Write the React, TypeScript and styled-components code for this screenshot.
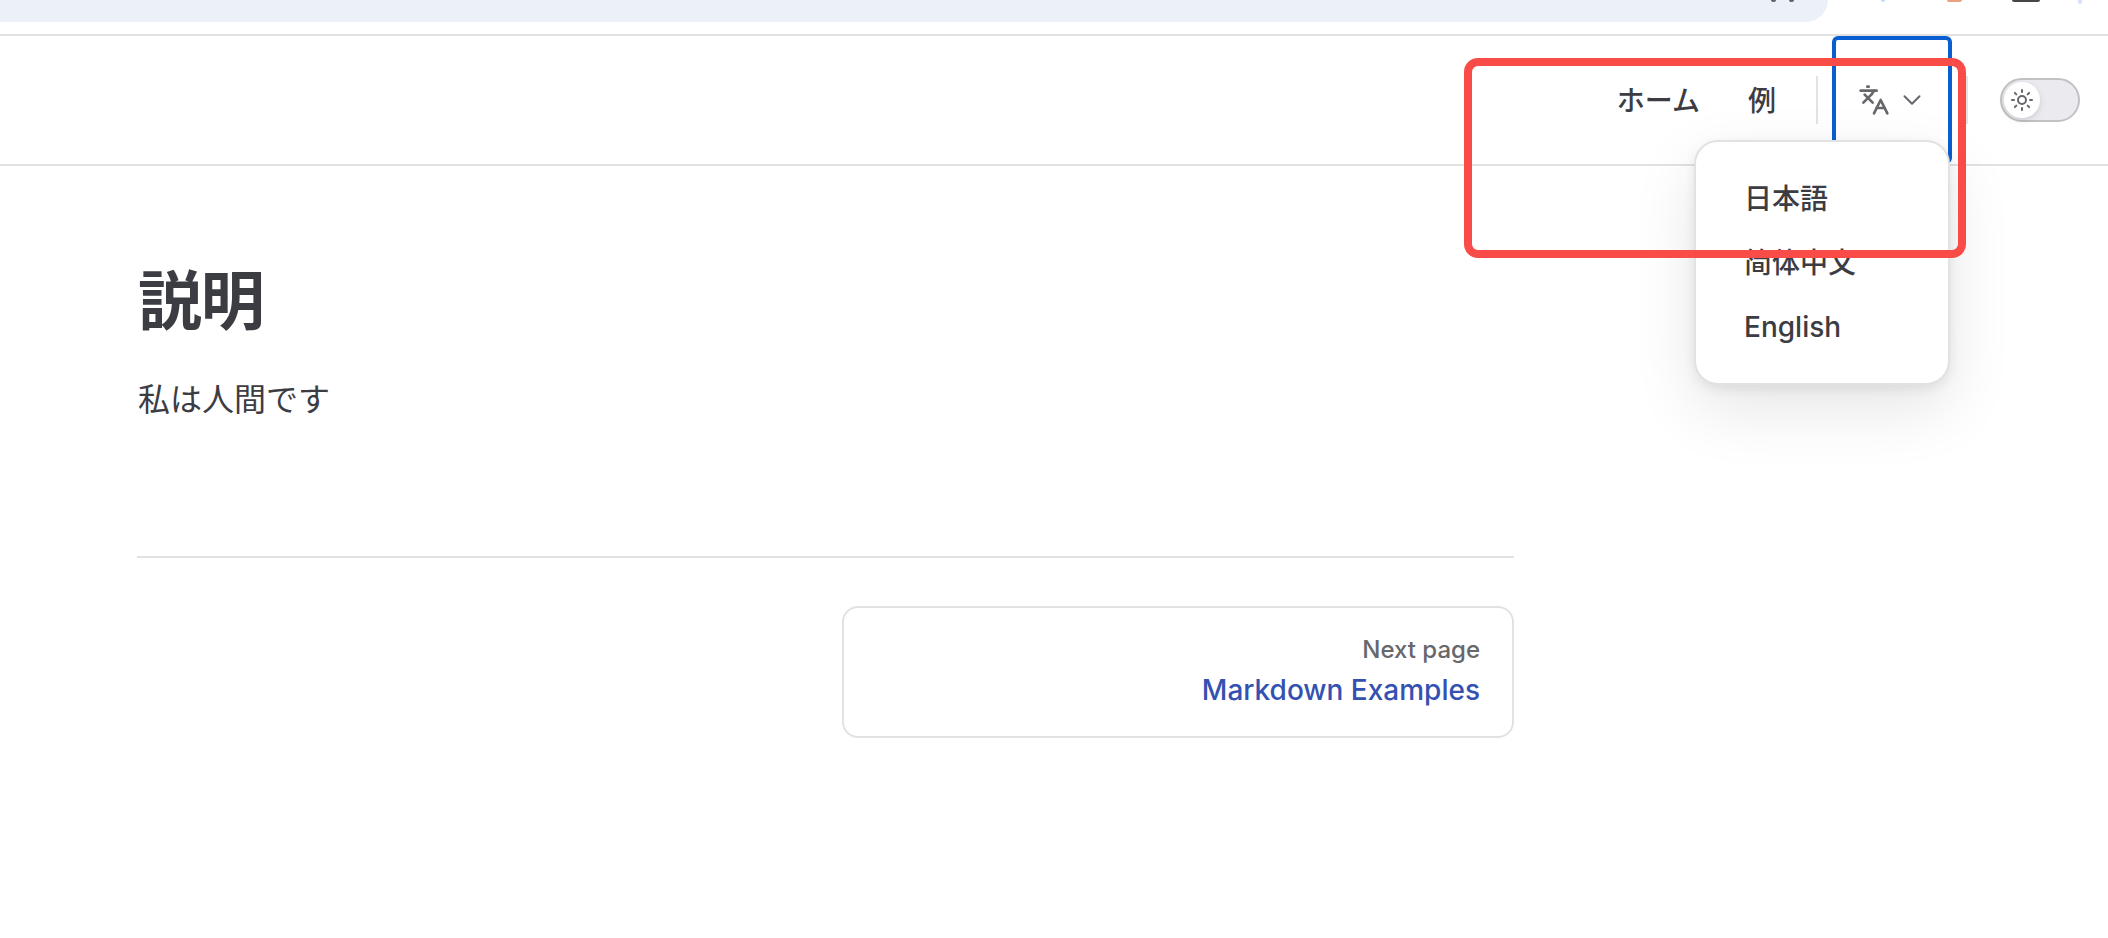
import { createGlobalStyle, styled } from "styled-components";
import { ChevronDown, Languages, Sun } from "lucide-react";

const GlobalStyle = createGlobalStyle`
  html, body {
    margin: 0;
    background: #fff;
  }
  body {
    font-family: Inter, "Noto Sans CJK JP", sans-serif;
    color: #3c3c43;
  }
`;

const Page = styled.div`
  position: relative;
  width: 2108px;
  height: 938px;
  overflow: hidden;
  background: #fff;
`;

const BrowserBar = styled.div`
  display: flex;
  height: 34px;
  border-bottom: 2px solid #e2e2e3;
`;

const AddressBar = styled.div`
  position: relative;
  width: 1828px;
  height: 22px;
  background: #ecf0f9;
  border-bottom-right-radius: 28px;
`;

const ToolbarIcons = styled.div`
  flex: 1;
  position: relative;
`;

const ToolbarIcon = styled.span<{ $left: number; $width: number; $height: number; $color: string }>`
  position: absolute;
  top: 0;
  left: ${({ $left }) => $left}px;
  width: ${({ $width }) => $width}px;
  height: ${({ $height }) => $height}px;
  background: ${({ $color }) => $color};
  border-radius: 0 0 ${({ $width }) => $width / 2}px ${({ $width }) => $width / 2}px;
`;

const NavBar = styled.header`
  display: flex;
  justify-content: flex-end;
  align-items: center;
  height: 128px;
  padding-right: 28px;
  border-bottom: 2px solid #e2e2e3;
`;

const NavLink = styled.a`
  padding: 2px 24px 0;
  font-size: 28px;
  font-weight: 500;
  line-height: 64px;
  color: #3c3c43;
`;

const NavDivider = styled.span<{ $before: number; $after: number }>`
  width: 2px;
  height: 48px;
  margin: 0 ${({ $after }) => $after}px 0 ${({ $before }) => $before}px;
  background: #e2e2e3;
`;

const LangButton = styled.button`
  box-sizing: border-box;
  display: flex;
  align-items: center;
  justify-content: center;
  gap: 7px;
  width: 120px;
  height: 128px;
  padding: 0;
  background: none;
  color: #67676c;
  border: 4px solid #0a5ecf;
  border-radius: 6px;
`;

const Toggle = styled.div`
  box-sizing: border-box;
  width: 80px;
  height: 44px;
  padding: 2px;
  background: #ebebef;
  border: 2px solid #c2c2c4;
  border-radius: 22px;
`;

const Knob = styled.div`
  display: flex;
  align-items: center;
  justify-content: center;
  width: 36px;
  height: 36px;
  background: #fff;
  color: #67676c;
  border-radius: 50%;
  box-shadow: 0 2px 4px rgba(0, 0, 0, 0.06), 0 2px 8px rgba(0, 0, 0, 0.08);
`;

const Dropdown = styled.div`
  position: absolute;
  top: 140px;
  left: 1694px;
  box-sizing: border-box;
  width: 256px;
  padding: 25px 24px 24px;
  background: #fff;
  border: 2px solid #e2e2e3;
  border-radius: 24px;
  box-shadow: 0 24px 64px rgba(0, 0, 0, 0.1), 0 4px 12px rgba(0, 0, 0, 0.08);
`;

const DropdownItem = styled.div`
  padding: 0 24px;
  font-size: 28px;
  font-weight: 500;
  line-height: 64px;
  white-space: nowrap;
`;

const Annotation = styled.div`
  position: absolute;
  top: 58px;
  left: 1464px;
  box-sizing: border-box;
  width: 502px;
  height: 200px;
  border: 8px solid #f94c48;
  border-radius: 14px;
`;

const Content = styled.main`
  width: 1377px;
  margin-left: 137px;
`;

const Title = styled.h1`
  margin: 0;
  padding: 95px 0 0 1px;
  font-size: 64px;
  font-weight: 700;
  line-height: 80px;
  letter-spacing: -1.28px;
`;

const Paragraph = styled.p`
  margin: 31px 0 0 1px;
  font-size: 32px;
  line-height: 56px;
`;

const Footer = styled.footer`
  display: flex;
  justify-content: flex-end;
  margin-top: 128px;
  padding-top: 48px;
  border-top: 2px solid #e2e2e3;
`;

const PagerLink = styled.a`
  box-sizing: border-box;
  display: block;
  width: 672px;
  padding: 22px 32px 26px;
  text-align: right;
  border: 2px solid #e2e2e3;
  border-radius: 16px;
`;

const PagerLabel = styled.span`
  display: block;
  font-size: 24px;
  font-weight: 500;
  line-height: 40px;
  color: #67676c;
`;

const PagerTitle = styled.span`
  display: block;
  font-size: 28px;
  font-weight: 500;
  line-height: 40px;
  color: #3451b2;
`;

export default function App() {
  return (
    <Page>
      <GlobalStyle />
      <BrowserBar>
        <AddressBar>
          <ToolbarIcon $left={1771} $width={5} $height={2} $color="#5f6368" />
          <ToolbarIcon $left={1789} $width={5} $height={2} $color="#5f6368" />
        </AddressBar>
        <ToolbarIcons>
          <ToolbarIcon $left={53} $width={4} $height={2} $color="#c5d8f8" />
          <ToolbarIcon $left={119} $width={15} $height={2} $color="#e8a27f" />
          <ToolbarIcon $left={184} $width={28} $height={2} $color="#47474a" />
          <ToolbarIcon $left={250} $width={4} $height={4} $color="#d5e2fa" />
        </ToolbarIcons>
      </BrowserBar>
      <NavBar>
        <NavLink>ホーム</NavLink>
        <NavLink>例</NavLink>
        <NavDivider $before={16} $after={14} />
        <LangButton>
          <Languages size={32} strokeWidth={2} />
          <ChevronDown size={30} strokeWidth={1.6} />
        </LangButton>
        <NavDivider $before={14} $after={32} />
        <Toggle>
          <Knob>
            <Sun size={24} strokeWidth={2} />
          </Knob>
        </Toggle>
      </NavBar>
      <Content>
        <Title>説明</Title>
        <Paragraph>私は人間です</Paragraph>
        <Footer>
          <PagerLink>
            <PagerLabel>Next page</PagerLabel>
            <PagerTitle>Markdown Examples</PagerTitle>
          </PagerLink>
        </Footer>
      </Content>
      <Dropdown>
        <DropdownItem>日本語</DropdownItem>
        <DropdownItem>简体中文</DropdownItem>
        <DropdownItem>English</DropdownItem>
      </Dropdown>
      <Annotation />
    </Page>
  );
}
